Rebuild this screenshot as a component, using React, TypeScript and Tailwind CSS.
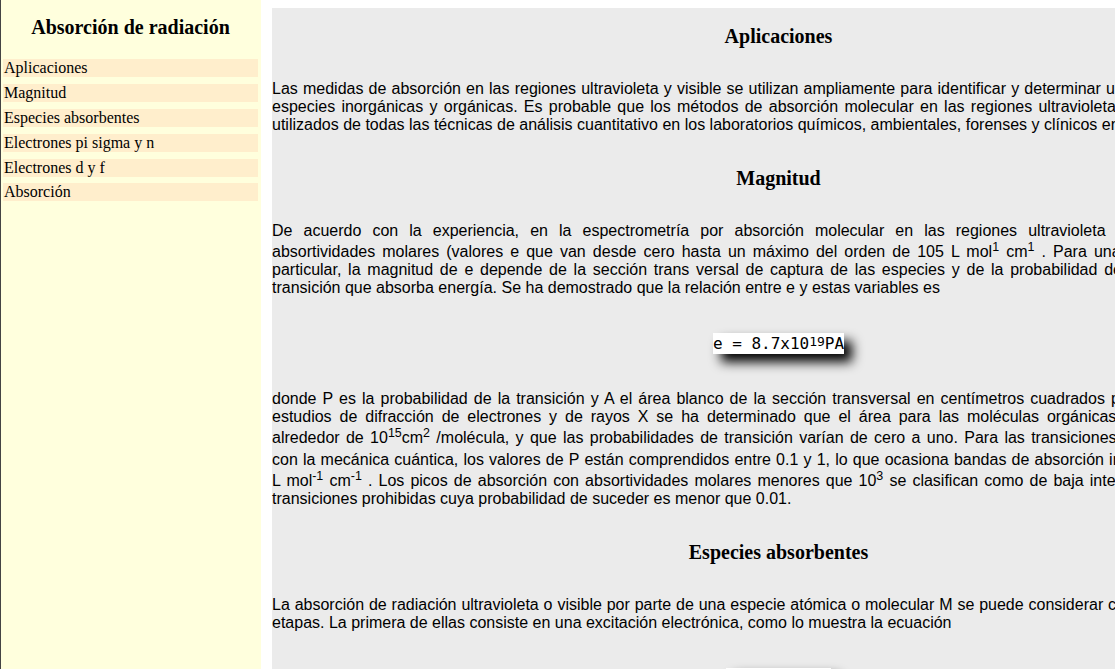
import type { ReactNode } from "react";

const navItems = [
  "Aplicaciones",
  "Magnitud",
  "Especies absorbentes",
  "Electrones pi sigma y n",
  "Electrones d y f",
  "Absorción",
];

function Sup({ children }: { children: ReactNode }) {
  return (
    <sup className="static align-super text-[0.78em] leading-[normal]">
      {children}
    </sup>
  );
}

// one rendered line of a justified paragraph
function Line({ children, last }: { children: ReactNode; last?: boolean }) {
  return (
    <div className={last ? "text-left" : "text-justify [text-align-last:justify]"}>
      {children}
    </div>
  );
}

function Heading({ children }: { children: ReactNode }) {
  return (
    <h2 className="mt-[17px] mb-4 text-center font-['Liberation_Serif',serif] text-[20px] font-bold leading-[normal]">
      {children}
    </h2>
  );
}

function Equation({ children }: { children: ReactNode }) {
  return (
    <div className="my-4 flex justify-center pt-1 pb-1">
      <span className="h-[21px] bg-white font-['DejaVu_Sans_Mono',monospace] text-[16px] leading-[21px] shadow-[8px_8px_12px_#000]">
        {children}
      </span>
    </div>
  );
}

export default function App() {
  return (
    <div className="flex h-screen w-screen overflow-hidden bg-white text-black">
      <aside className="w-[261px] shrink-0 border-l border-[#444] bg-[#ffffdd] pl-[2px] pr-[3px] font-['Liberation_Serif',serif]">
        <h2 className="mt-4 text-center text-[20px] font-bold leading-[normal]">
          Absorción de radiación
        </h2>
        <ul className="mt-[20px] flex flex-col gap-[6.9px] text-[16px] leading-[normal]">
          {navItems.map((item) => (
            <li key={item}>
              <a href="#" className="block bg-[#ffeecc] pl-[1px]">
                {item}
              </a>
            </li>
          ))}
        </ul>
      </aside>

      <main className="mt-2 ml-[11px] flex w-[1013px] shrink-0 flex-col self-start bg-[#ebebeb] font-['Liberation_Sans',Arial,sans-serif] text-[16px] leading-[normal]">
        <Heading>Aplicaciones</Heading>
        <div className="my-4">
          <Line>
            Las medidas de absorción en las regiones ultravioleta y visible se utilizan ampliamente para identificar y determinar una gran variedad de las
          </Line>
          <Line>
            especies inorgánicas y orgánicas. Es probable que los métodos de absorción molecular en las regiones ultravioleta y visible sean los más
          </Line>
          <Line last>
            utilizados de todas las técnicas de análisis cuantitativo en los laboratorios químicos, ambientales, forenses y clínicos en el mundo.
          </Line>
        </div>

        <Heading>Magnitud</Heading>
        <div className="my-4">
          <Line>
            De acuerdo con la experiencia, en la espectrometría por absorción molecular en las regiones ultravioleta y visible se observan
          </Line>
          <Line>
            absortividades molares (valores e que van desde cero hasta un máximo del orden de 105 L mol<Sup>1</Sup> cm<Sup>1</Sup> . Para una molécula orgánica en
          </Line>
          <Line>
            particular, la magnitud de e depende de la sección trans versal de captura de las especies y de la probabilidad de que se produzca una
          </Line>
          <Line last>
            transición que absorba energía. Se ha demostrado que la relación entre e y estas variables es
          </Line>
        </div>

        <Equation>
          e = 8.7x10<span className="relative -top-[3px] text-[13px]">19</span>PA
        </Equation>

        <div className="my-4">
          <Line>
            donde P es la probabilidad de la transición y A el área blanco de la sección transversal en centímetros cuadrados por molécula. Utilizando
          </Line>
          <Line>
            estudios de difracción de electrones y de rayos X se ha determinado que el área para las moléculas orgánicas más conocidas es de
          </Line>
          <Line>
            alrededor de 10<Sup>15</Sup>cm<Sup>2</Sup> /molécula, y que las probabilidades de transición varían de cero a uno. Para las transiciones permitidas de acuerdo
          </Line>
          <Line>
            con la mecánica cuántica, los valores de P están comprendidos entre 0.1 y 1, lo que ocasiona bandas de absorción intensas (e de 10<Sup>4</Sup> a 10<Sup>5</Sup>
          </Line>
          <Line>
            L mol<Sup>-1</Sup> cm<Sup>-1</Sup> . Los picos de absorción con absortividades molares menores que 10<Sup>3</Sup> se clasifican como de baja intensidad. Se deben a las
          </Line>
          <Line last>
            transiciones prohibidas cuya probabilidad de suceder es menor que 0.01.
          </Line>
        </div>

        <Heading>Especies absorbentes</Heading>
        <div className="my-4">
          <Line>
            La absorción de radiación ultravioleta o visible por parte de una especie atómica o molecular M se puede considerar como un proceso de dos
          </Line>
          <Line last>
            etapas. La primera de ellas consiste en una excitación electrónica, como lo muestra la ecuación
          </Line>
        </div>

        <Equation>
          M + hv → M*
        </Equation>
      </main>
    </div>
  );
}
